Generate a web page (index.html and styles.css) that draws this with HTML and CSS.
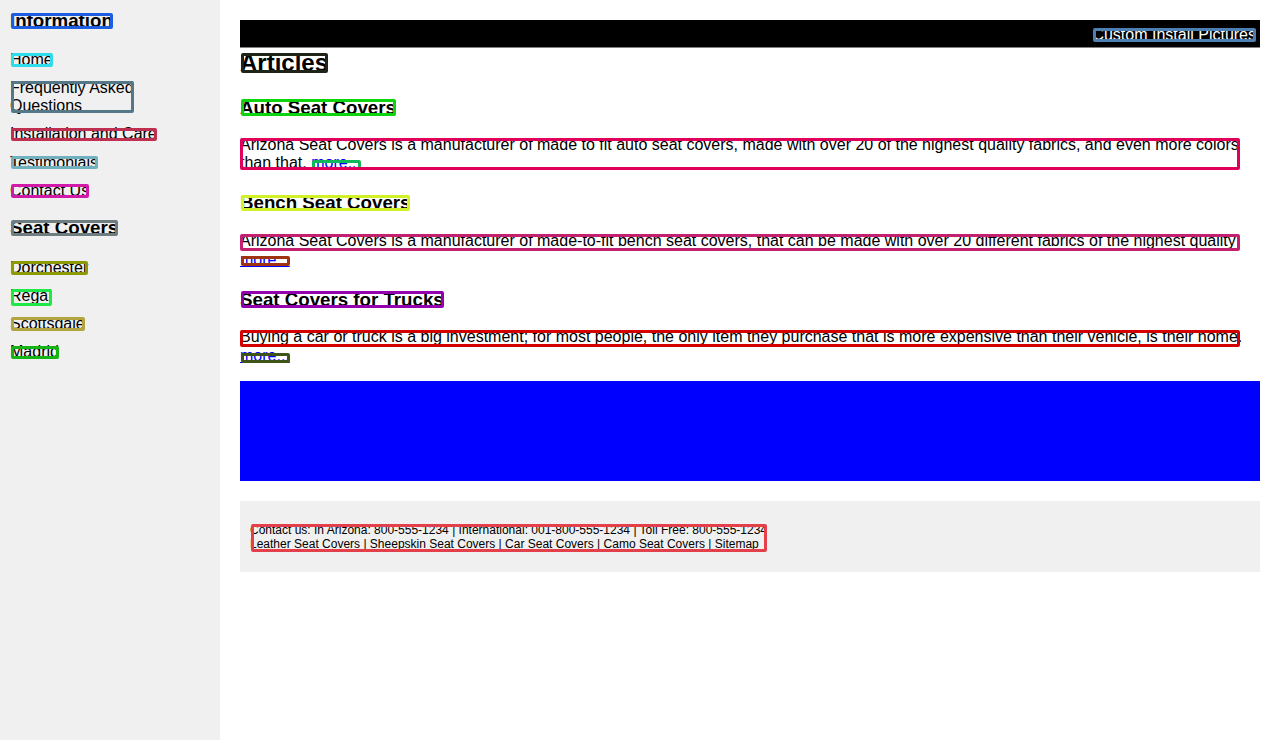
FILE: index.html
```html
<!DOCTYPE html>
<html lang="en">
<head>
<meta charset="utf-8">
<title>Arizona Seat Covers - Articles</title>
<link rel="stylesheet" href="styles.css">
</head>
<body>
<div class="page">
  <aside class="side">
    <h3 class="side-h"><span class="bx b-info">Information</span></h3>
    <ul class="nav">
      <li><a class="bx b-home" href="#">Home</a></li>
      <li><a class="bx b-faq" href="#">Frequently Asked<br>Questions</a></li>
      <li><a class="bx b-inst" href="#">Installation and Care</a></li>
      <li><a class="bx b-test" href="#">Testimonials</a></li>
      <li><a class="bx b-cont" href="#">Contact Us</a></li>
    </ul>
    <h3 class="side-h side-h2"><span class="bx b-seat">Seat Covers</span></h3>
    <ul class="nav">
      <li><a class="bx b-dorch" href="#">Dorchester</a></li>
      <li><a class="bx bx-d b-regal" href="#">Regal</a></li>
      <li><a class="bx b-scott" href="#">Scottsdale</a></li>
      <li><a class="bx b-madrid" href="#">Madrid</a></li>
    </ul>
  </aside>
  <main class="main">
    <div class="topbar"><a class="bx b-cip" href="#">Custom Install Pictures</a></div>
    <h2 class="art-h"><span class="bx b-art">Articles</span></h2>

    <h3 class="sec-h"><span class="bx b-auto">Auto Seat Covers</span></h3>
    <p class="para bx b-p1">Arizona Seat Covers is a manufacturer of made to fit auto seat covers, made with over 20 of the highest quality fabrics, and even more colors than that. <a class="more bx bx-x b-m1" href="#">more...</a></p>

    <h3 class="sec-h"><span class="bx b-bench">Bench Seat Covers</span></h3>
    <p class="para para-solo bx bx-d b-p2">Arizona Seat Covers is a manufacturer of made-to-fit bench seat covers, that can be made with over 20 different fabrics of the highest quality</p>
    <div class="more-line"><a class="more bx bx-x b-m2" href="#">more...</a></div>

    <h3 class="sec-h"><span class="bx b-truck">Seat Covers for Trucks</span></h3>
    <p class="para para-solo bx bx-d b-p3">Buying a car or truck is a big investment; for most people, the only item they purchase that is more expensive than their vehicle, is their home.</p>
    <div class="more-line more-line-end"><a class="more bx bx-x b-m3" href="#">more...</a></div>

    <div class="banner"></div>

    <footer class="foot">
      <p><span class="bx bx-d b-foot">Contact us: In Arizona: 800-555-1234 | International: 001-800-555-1234 | Toll Free: 800-555-1234<br><a href="#">Leather Seat Covers</a> | <a href="#">Sheepskin Seat Covers</a> | <a href="#">Car Seat Covers</a> | <a href="#">Camo Seat Covers</a> | <a href="#">Sitemap</a></span></p>
    </footer>
  </main>
</div>
</body>
</html>
```
FILE: styles.css
```css
* { box-sizing: border-box; }
html, body { margin: 0; padding: 0; }
body {
  font-family: "Liberation Sans", Arial, sans-serif;
  font-size: 16px;
  line-height: normal;
  color: #000;
  background: #fff;
}
.page { display: flex; min-height: 740px; }

/* sidebar */
.side {
  width: 220px;
  flex: none;
  background: #f0f0f0;
  padding: 10px 10px;
}
.side-h {
  font-size: 18.72px;
  font-weight: bold;
  margin: 0 0 19px;
}
.side-h2 { margin: 17px 0 20px; }
.nav { list-style: none; margin: 0; padding: 0; }
.nav li { margin: 0 0 10.2px; }
.nav a { color: #000; text-decoration: none; }

/* main */
.main { flex: 1; padding: 20px; min-width: 0; }
.topbar {
  height: 28px;
  background: #000;
  border-bottom: 1px solid #808080;
  display: flex;
  justify-content: flex-end;
  align-items: flex-start;
  padding: 6px 4px 0 0;
}
.topbar a { color: #fff; text-decoration: none; }
.art-h { font-size: 24px; font-weight: bold; margin: 1px 0 19.5px; }
.sec-h { font-size: 18.72px; font-weight: bold; margin: 0 0 17.5px; }
.para { margin: 0 0 20px; }
.para-solo { margin: 0; }
.more-line { margin: 1px 0 20px; }
.more-line-end { margin-bottom: 15.5px; }
.more { color: #00f; text-decoration: underline; }
.banner { height: 100px; background: #00f; }
.foot {
  margin-top: 20px;
  background: #f0f0f0;
  padding: 10px;
  font-size: 12px;
}
.foot p { margin: 12.5px 0 11px; }
.foot a { color: #000; text-decoration: none; }

/* annotation boxes (drawn over the ink of each element) */
.bx { position: relative; display: inline-block; }
.bx::after {
  content: "";
  position: absolute;
  left: 1px;
  right: 0;
  top: calc(0.205em - 1px);
  bottom: calc(0.229em - 1.5px);
  border: 3px solid var(--c);
  border-radius: 2px;
  pointer-events: none;
}
.bx-d::after { bottom: calc(0.019em - 1.5px); }
.bx-x::after { top: calc(0.40em - 0.5px); }
.para.bx { display: block; }
.para.bx::after { left: 0; right: 20px; }

.b-info { --c: #1d5ee0; }
.b-home { --c: #2fdcec; }
.b-faq { --c: #557888; }
.b-inst { --c: #bf3050; }
.b-test { --c: #72b0c0; }
.b-cont { --c: #d21aa8; }
.b-seat { --c: #6e7e80; }
.b-dorch { --c: #8c9a08; }
.b-regal { --c: #1ee848; }
.b-scott { --c: #b2a440; }
.b-madrid { --c: #14b414; }
.b-cip { --c: #4d80b2; }
.b-art { --c: #1e2418; }
.b-auto { --c: #0ed40e; }
.b-p1 { --c: #e0005c; }
.b-m1 { --c: #10b858; }
.b-bench { --c: #d2f028; }
.b-p2 { --c: #c42070; }
.b-m2 { --c: #a03410; }
.b-truck { --c: #9400b0; }
.b-p3 { --c: #d40000; }
.b-m3 { --c: #3e5418; }
.b-foot { --c: #e4404c; }
```
